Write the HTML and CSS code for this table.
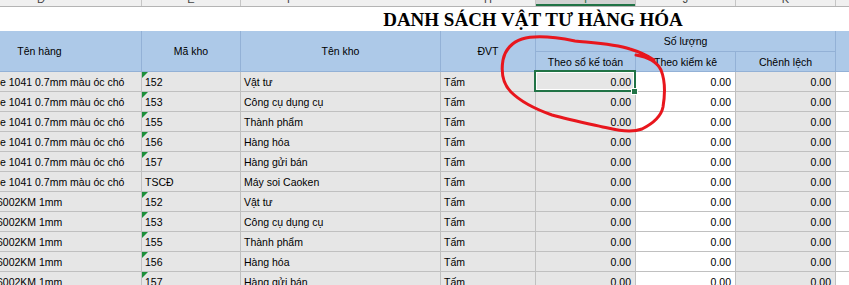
FILE: index.html
```html
<!DOCTYPE html>
<html lang="vi">
<head>
<meta charset="utf-8">
<title>Danh sách vật tư hàng hóa</title>
<link rel="stylesheet" href="styles.css">
</head>
<body>
<div class="sheet">
  <div class="colhdr">
    <div class="c1"><span>D</span></div>
    <div><span>E</span></div>
    <div class="nosep c3"><span>F</span></div>
    <div><span>H</span></div>
    <div class="csel"><span>I</span></div>
    <div><span>J</span></div>
    <div><span>K</span></div>
    <div class="nosep"></div>
  </div>
  <div class="title">DANH SÁCH VẬT TƯ HÀNG HÓA</div>
  <div class="head">
    <div class="h-span h-name">Tên hàng</div>
    <div class="h-span">Mã kho</div>
    <div class="h-span">Tên kho</div>
    <div class="h-span">ĐVT</div>
    <div class="h-group">Số lượng</div>
    <div class="h-span h-last"></div>
    <div class="h-sub">Theo sổ kế toán</div>
    <div class="h-sub">Theo kiểm kê</div>
    <div class="h-sub">Chênh lệch</div>
  </div>

  <div class="row">
    <div class="name">e 1041 0.7mm màu óc chó</div>
    <div class="code tri">152</div><div>Vật tư</div><div>Tấm</div>
    <div class="num sel">0.00</div><div class="num w">0.00</div><div class="num">0.00</div><div class="w last"></div>
  </div>
  <div class="row">
    <div class="name">e 1041 0.7mm màu óc chó</div>
    <div class="code tri">153</div><div>Công cụ dụng cụ</div><div>Tấm</div>
    <div class="num">0.00</div><div class="num w">0.00</div><div class="num">0.00</div><div class="w last"></div>
  </div>
  <div class="row">
    <div class="name">e 1041 0.7mm màu óc chó</div>
    <div class="code tri">155</div><div>Thành phẩm</div><div>Tấm</div>
    <div class="num">0.00</div><div class="num w">0.00</div><div class="num">0.00</div><div class="w last"></div>
  </div>
  <div class="row">
    <div class="name">e 1041 0.7mm màu óc chó</div>
    <div class="code tri">156</div><div>Hàng hóa</div><div>Tấm</div>
    <div class="num">0.00</div><div class="num w">0.00</div><div class="num">0.00</div><div class="w last"></div>
  </div>
  <div class="row">
    <div class="name">e 1041 0.7mm màu óc chó</div>
    <div class="code tri">157</div><div>Hàng gửi bán</div><div>Tấm</div>
    <div class="num">0.00</div><div class="num w">0.00</div><div class="num">0.00</div><div class="w last"></div>
  </div>
  <div class="row">
    <div class="name">e 1041 0.7mm màu óc chó</div>
    <div class="code">TSCĐ</div><div>Máy soi Caoken</div><div>Tấm</div>
    <div class="num">0.00</div><div class="num w">0.00</div><div class="num">0.00</div><div class="w last"></div>
  </div>
  <div class="row">
    <div class="name cut">6002KM 1mm</div>
    <div class="code tri">152</div><div>Vật tư</div><div>Tấm</div>
    <div class="num">0.00</div><div class="num w">0.00</div><div class="num">0.00</div><div class="w last"></div>
  </div>
  <div class="row">
    <div class="name cut">6002KM 1mm</div>
    <div class="code tri">153</div><div>Công cụ dụng cụ</div><div>Tấm</div>
    <div class="num">0.00</div><div class="num w">0.00</div><div class="num">0.00</div><div class="w last"></div>
  </div>
  <div class="row">
    <div class="name cut">6002KM 1mm</div>
    <div class="code tri">155</div><div>Thành phẩm</div><div>Tấm</div>
    <div class="num">0.00</div><div class="num w">0.00</div><div class="num">0.00</div><div class="w last"></div>
  </div>
  <div class="row">
    <div class="name cut">6002KM 1mm</div>
    <div class="code tri">156</div><div>Hàng hóa</div><div>Tấm</div>
    <div class="num">0.00</div><div class="num w">0.00</div><div class="num">0.00</div><div class="w last"></div>
  </div>
  <div class="row">
    <div class="name cut">6002KM 1mm</div>
    <div class="code tri">157</div><div>Hàng gửi bán</div><div>Tấm</div>
    <div class="num">0.00</div><div class="num w">0.00</div><div class="num">0.00</div><div class="w last"></div>
  </div>
</div>

<svg class="mark" width="849" height="285" viewBox="0 0 849 285" aria-hidden="true">
  <path d="M 636 55 C 648 57, 657 62, 661 70 C 665 80, 665 95, 663 107 C 661 117, 652 124, 642 129 C 634 132, 620 131, 608 128 C 590 124, 570 120, 552 115 C 535 109, 520 101, 511 92 C 503 84, 501 72, 503 60 C 505 50, 512 42, 522 39 C 535 35, 555 37, 575 41 C 595 43, 615 44, 630 49 C 640 52, 648 56, 654 60"/>
</svg>
</body>
</html>
```

FILE: styles.css
```css
html, body {
  margin: 0;
  padding: 0;
  background: #ffffff;
  width: 849px;
  height: 285px;
  overflow: hidden;
}

body {
  font-family: "Liberation Sans", Arial, sans-serif;
  font-size: 10.5px;
  color: #000;
  position: relative;
}

.sheet {
  width: 849px;
}

/* Excel column letter strip (only its bottom edge is visible) */
.colhdr {
  display: grid;
  grid-template-columns: 142px 99px 200px 95px 100px 100px 100px 13px;
  height: 7px;
  box-sizing: border-box;
  border-bottom: 1px solid #b4b4b4;
  background: #f0f0f0;
}

.colhdr > div {
  border-right: 1px solid #c6c6c6;
  overflow: hidden;
  text-align: center;
  font-size: 11px;
  line-height: 12px;
  color: #444;
}

.colhdr span {
  display: block;
  margin-top: -7px;
}

.colhdr .c1 {
  text-align: left;
  padding-left: 37px;
}

.colhdr .c3 {
  text-align: left;
  padding-left: 46px;
}

.colhdr .nosep {
  border-right: none;
}

.colhdr .csel {
  background: #d2d2d2;
  color: #217346;
  box-shadow: inset 0 -2px 0 #217346;
}

/* Title */
.title {
  height: 24px;
  line-height: 24px;
  padding-top: 1px;
  box-sizing: border-box;
  padding-left: 217px;
  text-align: center;
  white-space: nowrap;
  font-family: "Liberation Serif", "Times New Roman", serif;
  font-weight: bold;
  font-size: 19px;
}

/* Table header */
.head {
  display: grid;
  grid-template-columns: 142px 99px 200px 95px 100px 100px 100px 13px;
  grid-template-rows: 21px 20px;
  background: #adc9e8;
}

.head > div {
  box-sizing: border-box;
  border-right: 1px solid #93b1d6;
  border-bottom: 1px solid #93b1d6;
  display: flex;
  align-items: center;
  justify-content: center;
  white-space: nowrap;
  font-size: 10.5px;
}

.head .h-span {
  grid-row: 1 / 3;
}

.head .h-name {
  padding-right: 62px;
}

.head .h-group {
  grid-column: 5 / 8;
  grid-row: 1;
}

.head .h-last {
  grid-column: 8;
  border-right: none;
}

.head .h-sub {
  grid-row: 2;
}

/* Data rows */
.row {
  display: grid;
  grid-template-columns: 142px 99px 200px 95px 100px 100px 100px 13px;
  height: 20px;
  box-sizing: border-box;
  border-bottom: 1px solid #c0c0c0;
}

.row > div {
  background: #e6e6e6;
  border-right: 1px solid #c0c0c0;
  padding: 1px 3px 0;
  line-height: 18px;
  white-space: nowrap;
  overflow: hidden;
}

.row > .w {
  background: #ffffff;
}

.row > .last {
  border-right: none;
}

.row > .name {
  padding-left: 0;
}

.row > .cut {
  text-indent: -3px;
}

.row > .num {
  text-align: right;
  padding-right: 4px;
}

.code {
  position: relative;
}

.code.tri::before {
  content: "";
  position: absolute;
  left: 0;
  top: 0;
  width: 0;
  height: 0;
  border-top: 6px solid #1e8f3b;
  border-right: 6px solid transparent;
}

/* Selected cell */
.row > .sel {
  position: relative;
  overflow: visible;
}

.sel::after {
  content: "";
  position: absolute;
  left: -2px;
  top: -2px;
  right: -1px;
  bottom: -1px;
  border: 2px solid #217346;
  box-shadow: inset 0 0 0 1px #ffffff;
}

.sel::before {
  content: "";
  position: absolute;
  right: -2px;
  bottom: -3px;
  width: 5px;
  height: 5px;
  background: #217346;
  box-shadow: 0 0 0 1px #ffffff;
  z-index: 2;
}

/* Hand-drawn red annotation */
.mark {
  position: absolute;
  left: 0;
  top: 0;
  pointer-events: none;
}

.mark path {
  fill: none;
  stroke: #e8161d;
  stroke-width: 3;
  stroke-linecap: round;
  stroke-linejoin: round;
}
```
